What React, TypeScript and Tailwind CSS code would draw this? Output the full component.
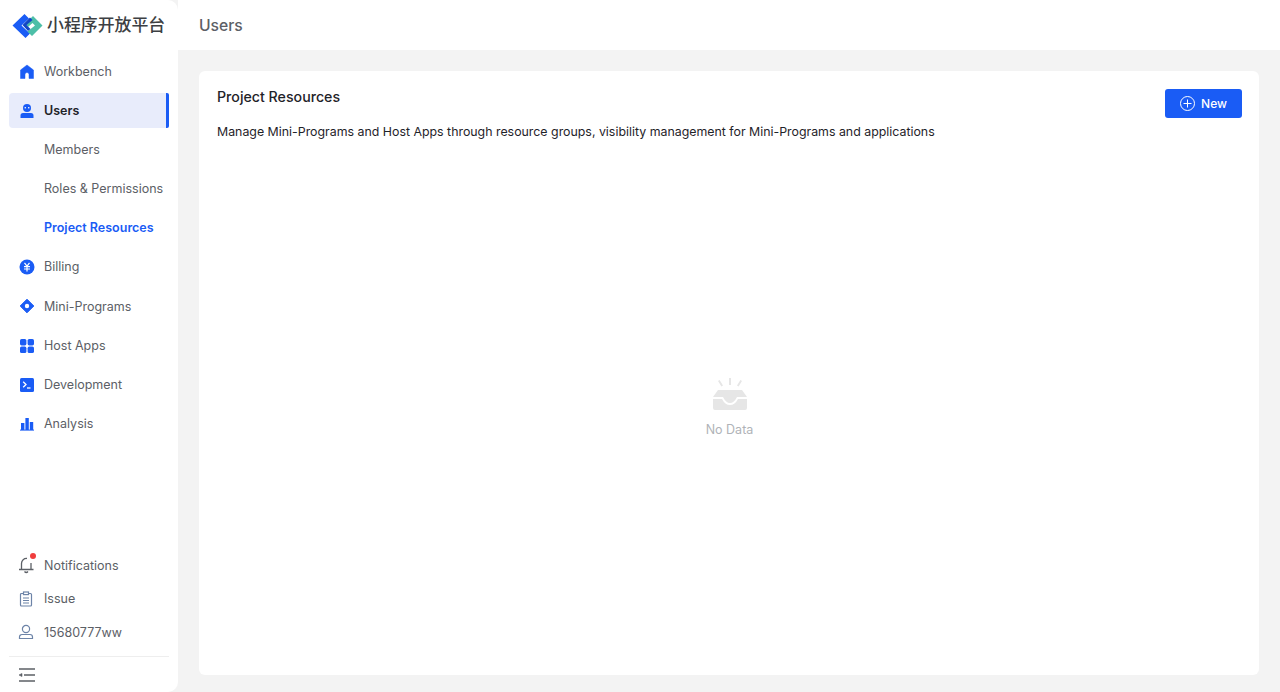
import { ReactNode } from "react";

const font = "font-['Inter','Noto_Sans_CJK_SC',sans-serif]";

function Logo() {
  return (
    <svg width="31" height="26" viewBox="0 0 31 26" fill="none">
      <path d="M12.5 1 L0.5 12.5 L13.5 25 L18 20.5 L9.5 12.5 L17 5.5 Z" fill="#1a5cf5" />
      <path d="M21 3 L30.5 12.5 L20 23 L15.5 18.5 L23 12.5 L20.5 10 L16 14 L13 11 Z" fill="#4dbfa8" />
      <path d="M18 4.5 L10.5 12 L16 18 L18.5 16 L14.5 12 L20.5 7 Z" fill="#1246c4" />
    </svg>
  );
}

function NavIcon({ name }: { name: string }) {
  const blue = "#1a5cf5";
  if (name === "home")
    return (
      <svg width="16" height="16" viewBox="0 0 16 16">
        <path d="M8 1 L14.5 6 V14.5 H10 V10.5 A2 2 0 0 0 6 10.5 V14.5 H1.5 V6 Z" fill={blue} stroke={blue} strokeWidth="0.5" strokeLinejoin="round" />
      </svg>
    );
  if (name === "user")
    return (
      <svg width="16" height="16" viewBox="0 0 16 16">
        <circle cx="8" cy="5" r="4" fill={blue} />
        <rect x="5.6" y="4" width="1.4" height="1.4" fill="#e8ecfb" />
        <rect x="9" y="4" width="1.4" height="1.4" fill="#e8ecfb" />
        <path d="M1.5 15 V12.5 A2.5 2.5 0 0 1 4 10 H12 A2.5 2.5 0 0 1 14.5 12.5 V15 Z" fill={blue} />
      </svg>
    );
  if (name === "yen")
    return (
      <svg width="16" height="16" viewBox="0 0 16 16">
        <circle cx="8" cy="8" r="7.5" fill={blue} />
        <path d="M5.5 3.8 L8 7.2 L10.5 3.8 M5 7.6 H11 M5 10 H11 M8 7.2 V12.5" stroke="#fff" strokeWidth="1.2" fill="none" />
      </svg>
    );
  if (name === "diamond")
    return (
      <svg width="16" height="16" viewBox="0 0 16 16">
        <path d="M8 1.2 L14.8 8 L8 14.8 L1.2 8 Z" fill={blue} stroke={blue} strokeLinejoin="round" />
        <circle cx="8" cy="8" r="2.2" fill="#fff" />
      </svg>
    );
  if (name === "grid")
    return (
      <svg width="16" height="16" viewBox="0 0 16 16" fill={blue}>
        <rect x="1" y="1" width="6.4" height="6.4" rx="1.6" />
        <rect x="8.6" y="1" width="6.4" height="6.4" rx="1.6" />
        <rect x="1" y="8.6" width="6.4" height="6.4" rx="1.6" />
        <rect x="8.6" y="8.6" width="6.4" height="6.4" rx="1.6" />
      </svg>
    );
  if (name === "terminal")
    return (
      <svg width="16" height="16" viewBox="0 0 16 16">
        <rect x="1" y="1" width="14" height="14" rx="1.5" fill={blue} />
        <path d="M4.2 4.8 L7 7.5 L4.2 10.2" stroke="#fff" strokeWidth="1.3" fill="none" />
        <path d="M8 11 H11.5" stroke="#fff" strokeWidth="1.3" />
      </svg>
    );
  return (
    <svg width="16" height="16" viewBox="0 0 16 16" fill={blue}>
      <rect x="2" y="7" width="3.4" height="7" />
      <rect x="6.4" y="2" width="3.4" height="12" />
      <rect x="10.8" y="6" width="3.4" height="8" />
      <rect x="1" y="13.6" width="14" height="1" />
    </svg>
  );
}

function NavItem({ icon, label }: { icon: string; label: string }) {
  return (
    <div className="flex h-[35.15px] items-center gap-[9px] pl-[19px] text-[12.5px] text-[#5c6066]">
      <NavIcon name={icon} />
      <span className="pt-[1px]">{label}</span>
    </div>
  );
}

function SubItem({ label, active }: { label: string; active?: boolean }) {
  return (
    <div className={`flex h-[35.15px] items-center pl-[44px] pt-[1px] text-[12.5px] ${active ? "font-semibold text-[#1a5cf5]" : "text-[#5c6066]"}`}>
      {label}
    </div>
  );
}

function FooterItem({ icon, label }: { icon: ReactNode; label: string }) {
  return (
    <div className="flex h-[33.5px] items-center gap-[10px] pl-[18px] text-[12.5px] text-[#5c6066]">
      <span className="flex w-[16px] justify-center">{icon}</span>
      <span className="pt-[2px]">{label}</span>
    </div>
  );
}

export default function App() {
  return (
    <div className={`flex h-[692px] w-[1280px] overflow-hidden bg-[#f3f3f3] ${font}`}>
      {/* Sidebar */}
      <aside className="flex w-[178px] shrink-0 flex-col rounded-r-[10px] bg-white">
        <div className="flex h-[51px] items-center gap-[4px] pl-[12px]">
          <Logo />
          <span className="text-[16.9px] font-medium text-[#3d3f43]">小程序开放平台</span>
        </div>
        <div className="mt-[3px] flex flex-col gap-[4px]">
          <NavItem icon="home" label="Workbench" />
          <div className="relative mx-[9px] flex h-[35.15px] items-center gap-[9px] rounded-[4px] bg-[#e8ecfb] pl-[10px] text-[12.5px] font-semibold text-[#1f2329]">
            <NavIcon name="user" />
            <span className="pt-[1px]">Users</span>
            <span className="absolute right-0 top-0 h-full w-[3px] rounded-r-[2px] bg-[#1a5cf5]" />
          </div>
          <SubItem label="Members" />
          <SubItem label="Roles & Permissions" />
          <SubItem label="Project Resources" active />
          <NavItem icon="yen" label="Billing" />
          <NavItem icon="diamond" label="Mini-Programs" />
          <NavItem icon="grid" label="Host Apps" />
          <NavItem icon="terminal" label="Development" />
          <NavItem icon="chart" label="Analysis" />
        </div>
        <div className="mt-auto flex flex-col">
          <FooterItem
            label="Notifications"
            icon={
              <span className="relative flex">
                <svg width="17" height="18" viewBox="0 0 17 18" fill="none" stroke="#5c6066" strokeWidth="1.3">
                  <path d="M1 13.5 H15.5 M3.5 13.5 V7.5 A5 5 0 0 1 9 2.5 M13 7 V13.5 M6.5 15.5 Q8.2 17.5 10 15.5" />
                </svg>
                <span className="absolute right-[-1px] top-[-3px] h-[6px] w-[6px] rounded-full bg-[#f03d3d]" />
              </span>
            }
          />
          <FooterItem
            label="Issue"
            icon={
              <svg width="16" height="16" viewBox="0 0 16 16" fill="none" stroke="#6d84a8" strokeWidth="1.2">
                <rect x="2.5" y="2.5" width="11" height="12.5" rx="1" />
                <rect x="5.5" y="1" width="5" height="2.6" fill="#fff" />
                <path d="M5 7 H11 M5 9.5 H11 M5 12 H11" />
              </svg>
            }
          />
          <FooterItem
            label="15680777ww"
            icon={
              <svg width="16" height="16" viewBox="0 0 16 16" fill="none" stroke="#6d84a8" strokeWidth="1.2">
                <circle cx="8" cy="5" r="3.6" />
                <path d="M1.5 14.5 V13 A2.5 2.5 0 0 1 4 10.5 H12 A2.5 2.5 0 0 1 14.5 13 V14.5 Z" />
              </svg>
            }
          />
          <div className="mx-[9px] mt-[7px] border-t border-[#eeeeee]" />
          <div className="flex h-[35px] items-center pl-[18px]">
            <svg width="18" height="16" viewBox="0 0 18 16" fill="none" stroke="#5c6066" strokeWidth="1.5">
              <path d="M1 2 H17 M6 8 H17 M1 14 H17" />
              <path d="M1 8 L4 6.5 V9.5 Z" fill="#5c6066" strokeWidth="0.6" />
            </svg>
          </div>
        </div>
      </aside>

      {/* Main */}
      <div className="flex min-w-0 flex-1 flex-col">
        <header className="flex h-[50px] shrink-0 items-center bg-white pl-[21px] pt-[1px] text-[15.7px] font-medium text-[#5c6066]">
          Users
        </header>
        <div className="flex flex-1 pb-[17px] pl-[21px] pr-[21px] pt-[21px]">
          <section className="flex flex-1 flex-col rounded-[6px] bg-white pl-[18px] pr-[17px] pt-[18px]">
            <div className="flex items-start justify-between">
              <h2 className="mt-[-2px] text-[14.2px] font-medium leading-[20px] text-[#1f2329]">Project Resources</h2>
              <button className="flex h-[29px] w-[77px] items-center justify-center gap-[6px] rounded-[3px] bg-[#1a5cf5] text-[12px] font-medium text-white">
                <svg width="15" height="15" viewBox="0 0 15 15" fill="none" stroke="#fff" strokeWidth="1">
                  <circle cx="7.5" cy="7.5" r="7" />
                  <path d="M7.5 3.5 V11.5 M3.5 7.5 H11.5" />
                </svg>
                New
              </button>
            </div>
            <p className="mt-[4px] text-[12.36px] leading-[20px] text-[#1f2329]">
              Manage Mini-Programs and Host Apps through resource groups, visibility management for Mini-Programs and applications
            </p>
            <div className="flex flex-1 flex-col items-center justify-center">
              <svg width="36" height="32" viewBox="0 0 36 32" fill="#e6e6e6">
                <path d="M17 0 H19 V7 H17 Z M6 3 L7.6 2 L11 7.5 L9.4 8.5 Z M30 3 L28.4 2 L25 7.5 L26.6 8.5 Z" />
                <path d="M6 12 H30 L35 19 H25 Q22 25 18 25 Q14 25 11 19 H1 Z" />
                <path d="M1 21 H10 Q13 27 18 27 Q23 27 26 21 H35 V30 A2 2 0 0 1 33 32 H3 A2 2 0 0 1 1 30 Z" />
              </svg>
              <span className="mt-[11px] text-[12.5px] text-[#b0b3b8]">No Data</span>
            </div>
          </section>
        </div>
      </div>
    </div>
  );
}
